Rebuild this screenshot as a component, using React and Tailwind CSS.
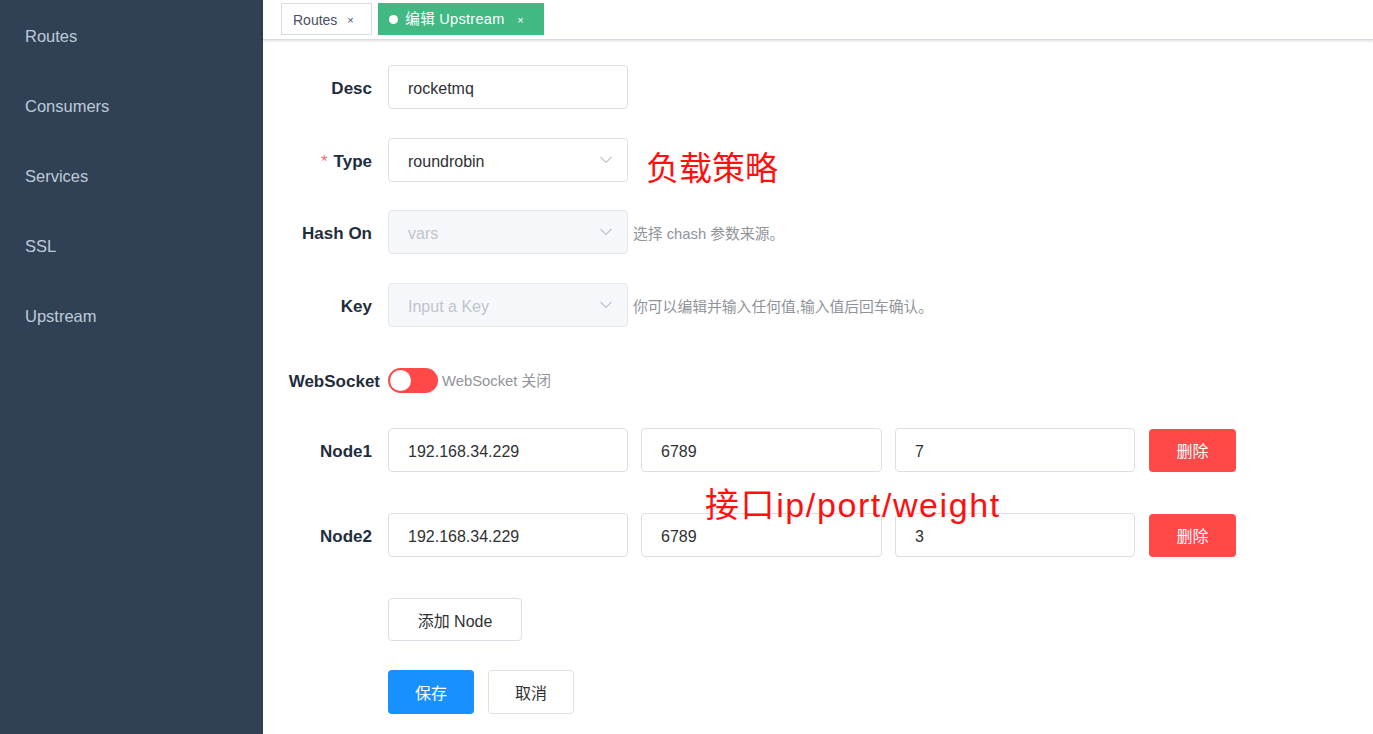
import React from 'react';

const FONT = { fontFamily: '"Liberation Sans", "Noto Sans CJK SC", sans-serif' };

const menu = ['Routes', 'Consumers', 'Services', 'SSL', 'Upstream'];

function Chevron() {
  return (
    <svg width="12" height="7" viewBox="0 0 12 7" className="absolute right-[15px] top-1/2 -translate-y-1/2">
      <polyline points="0.5,0.5 6,6 11.5,0.5" fill="none" stroke="#c0c4cc" strokeWidth="1.2" />
    </svg>
  );
}

function Label({ children, required, className = 'pr-4' }) {
  return (
    <div className={`w-[125px] shrink-0 pt-[4px] text-right text-[17px] font-bold text-[#1f2d3d] ${className}`}>
      {required && <span className="mr-[6px] font-normal text-[#f56c6c]">*</span>}
      {children}
    </div>
  );
}

function Input({ value, w = 'w-[240px]' }) {
  return (
    <div className={`flex h-[44px] ${w} items-center rounded-[4px] border border-[#dcdfe6] bg-white pl-[19px] pt-[4px] text-[16px] text-[#303133]`}>
      {value}
    </div>
  );
}

function Select({ value, disabled }) {
  return (
    <div
      className={`relative flex h-[44px] w-[240px] items-center rounded-[4px] border pl-[19px] pt-[4px] text-[16px] ${
        disabled ? 'border-[#e4e7ed] bg-[#f5f7fa] text-[#c0c4cc]' : 'border-[#dcdfe6] bg-white text-[#303133]'
      }`}
    >
      {value}
      <Chevron />
    </div>
  );
}

function Hint({ children }) {
  return <span className="ml-[5px] pt-[4px] text-[14.8px] text-[#909399]">{children}</span>;
}

function NodeRow({ label, ip, port, weight, className }) {
  return (
    <div className={`flex items-center ${className}`}>
      <Label>{label}</Label>
      <div className="flex items-center gap-[13px]">
        <Input value={ip} />
        <Input value={port} w="w-[241px]" />
        <Input value={weight} />
      </div>
      <button className="ml-[14px] h-[43px] w-[87px] rounded-[4px] bg-[#ff4949] pt-[4px] text-[16px] text-white">删除</button>
    </div>
  );
}

export default function App() {
  return (
    <div className="flex h-[734px] w-full overflow-hidden bg-white" style={FONT}>
      {/* Sidebar */}
      <aside className="h-full w-[263px] shrink-0 bg-[#304156]">
        <ul>
          {menu.map((m) => (
            <li key={m} className="flex h-[70px] items-center pl-[25px] pt-[2px] text-[16.5px] text-[#bfcbd9]">
              {m}
            </li>
          ))}
        </ul>
      </aside>

      {/* Main */}
      <main className="relative flex-1">
        {/* Tags view */}
        <div className="flex h-[40px] items-start gap-[6px] border-b border-[#d8dce5] pl-[18px] pt-[3px] shadow-[0_1px_3px_0_rgba(0,0,0,0.12),0_0_3px_0_rgba(0,0,0,0.04)]">
          <div className="flex h-[32px] items-center border border-[#d8dce5] pl-[11px] pr-[13px] pt-[2px] text-[14px] text-[#495060]">
            Routes
            <span className="ml-[5px] w-[16px] text-center text-[11px]">×</span>
          </div>
          <div className="flex h-[32px] items-center border border-[#42b983] bg-[#42b983] pl-[10px] pr-[14px] pt-[2px] text-[14.5px] text-white">
            <span className="mr-[7px] -mt-[2px] h-[9px] w-[9px] rounded-full bg-white" />
            <span className="tracking-[0.3px]">编辑 Upstream</span>
            <span className="ml-[8px] w-[16px] text-center text-[11px]">×</span>
          </div>
        </div>

        {/* Form */}
        <div className="pt-[25px]">
          <div className="flex items-center">
            <Label>Desc</Label>
            <Input value="rocketmq" />
          </div>

          <div className="mt-[29px] flex items-center">
            <Label required>Type</Label>
            <Select value="roundrobin" />
          </div>

          <div className="mt-[28px] flex items-center">
            <Label>Hash On</Label>
            <Select value="vars" disabled />
            <Hint>选择 chash 参数来源。</Hint>
          </div>

          <div className="mt-[29px] flex items-center">
            <Label>Key</Label>
            <Select value="Input a Key" disabled />
            <Hint>你可以编辑并输入任何值,输入值后回车确认。</Hint>
          </div>

          <div className="mt-[31px] flex h-[44px] items-center">
            <Label className="whitespace-nowrap pr-[8px]">WebSocket</Label>
            <div className="flex h-[25px] w-[50px] items-center rounded-full bg-[#ff4949] pl-[2px]">
              <span className="h-[21px] w-[21px] rounded-full bg-white" />
            </div>
            <span className="ml-[4px] pt-[3px] text-[14.8px] text-[#909399]">WebSocket 关闭</span>
          </div>

          <NodeRow className="mt-[26px]" label="Node1" ip="192.168.34.229" port="6789" weight="7" />
          <NodeRow className="mt-[41px]" label="Node2" ip="192.168.34.229" port="6789" weight="3" />

          <div className="mt-[41px] flex items-center">
            <div className="w-[125px] shrink-0" />
            <button className="h-[43px] w-[134px] rounded-[4px] border border-[#dcdfe6] bg-white pt-[4px] text-[16px] text-[#303133]">
              添加 Node
            </button>
          </div>

          <div className="mt-[29px] flex items-center gap-[14px]">
            <div className="w-[111px] shrink-0" />
            <button className="h-[44px] w-[86px] rounded-[4px] bg-[#1890ff] pt-[4px] text-[16px] text-white">保存</button>
            <button className="h-[44px] w-[86px] rounded-[4px] border border-[#dcdfe6] bg-white pt-[4px] text-[16px] text-[#303133]">
              取消
            </button>
          </div>
        </div>

        {/* Red annotations over the form */}
        <div className="pointer-events-none absolute left-[383px] top-[152px] text-[33px] leading-none text-[#ff1010]">
          负载策略
        </div>
        <div className="pointer-events-none absolute left-[442px] top-[488px] text-[34px] leading-none tracking-[1.6px] text-[#ff1010]">
          接口ip/port/weight
        </div>
      </main>
    </div>
  );
}
